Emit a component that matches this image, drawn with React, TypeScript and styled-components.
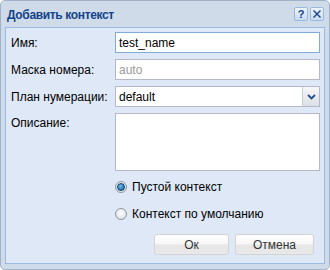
import React from "react";
import styled, { createGlobalStyle } from "styled-components";

const Global = createGlobalStyle`
  html, body { margin: 0; padding: 0; background: #ffffff; }
  body { font-family: "Liberation Sans", Arial, sans-serif; font-size: 12px; }
  * { box-sizing: border-box; }
`;

const Window = styled.div`
  width: 330px;
  height: 270px;
  background: #cfdbe8;
  border: 1px solid #9fb2c8;
  border-radius: 5px;
  display: flex;
  flex-direction: column;
  overflow: hidden;
`;

const TitleBar = styled.div`
  height: 26px;
  display: flex;
  align-items: center;
  padding: 0 5px 0 6px;
  flex: none;
`;

const Title = styled.div`
  flex: 1;
  font-weight: bold;
  font-size: 12px;
  letter-spacing: -0.35px;
  color: #15428b;
  padding-top: 1px;
`;

const Tools = styled.div`
  display: flex;
  gap: 2px;
`;

const Tool = styled.div`
  width: 14px;
  height: 14px;
  border: 1px solid #9ab9de;
  border-radius: 2px;
  background: linear-gradient(#eef4fb, #c9dbef);
  color: #15428b;
  display: flex;
  align-items: center;
  justify-content: center;
  font-weight: bold;
  font-size: 11px;
  line-height: 1;
`;

const Panel = styled.div`
  margin: 0 4px 5px 4px;
  flex: 1;
  background: #dfe8f6;
  border: 1px solid #99bbe8;
  padding: 4px 4px 8px 5px;
  display: flex;
  flex-direction: column;
`;

const Form = styled.div`
  display: grid;
  grid-template-columns: 104px 205px;
  row-gap: 6px;
  align-items: center;
`;

const Label = styled.div<{ $top?: boolean }>`
  color: #000;
  font-size: 12px;
  align-self: ${(p) => (p.$top ? "start" : "center")};
  padding-top: ${(p) => (p.$top ? "3px" : "0")};
`;

const Field = styled.div<{ $focus?: boolean; $h?: number }>`
  height: ${(p) => p.$h ?? 21}px;
  background: #fff;
  border: 1px solid ${(p) => (p.$focus ? "#7eadd9" : "#b5b8c8")};
  display: flex;
  align-items: center;
  padding-left: 3px;
  font-size: 12px;
  color: #000;
`;

const Value = styled.span<{ $muted?: boolean }>`
  flex: 1;
  color: ${(p) => (p.$muted ? "#9a9a9a" : "#000")};
`;

const Trigger = styled.div`
  width: 17px;
  height: 100%;
  border-left: 1px solid #c8ccd6;
  background: linear-gradient(#f6f7f9, #dcdfe4);
  display: flex;
  align-items: center;
  justify-content: center;
`;

const Options = styled.div`
  margin-top: 6px;
  padding-left: 104px;
  display: flex;
  flex-direction: column;
  gap: 7px;
`;

const Option = styled.div`
  height: 20px;
  display: flex;
  align-items: center;
  gap: 5px;
  font-size: 12px;
  color: #000;
`;

const Radio = styled.div<{ $on?: boolean }>`
  width: 12px;
  height: 12px;
  border-radius: 50%;
  border: 1px solid #8d96a2;
  background: radial-gradient(circle at 50% 40%, #ffffff, #d4d8dd);
  display: flex;
  align-items: center;
  justify-content: center;
  &::after {
    content: "";
    display: ${(p) => (p.$on ? "block" : "none")};
    width: 6px;
    height: 6px;
    border-radius: 50%;
    background: radial-gradient(circle at 40% 35%, #6fc0f0, #0a5a9c);
    border: 1px solid #0c3f6e;
  }
`;

const Buttons = styled.div`
  margin-top: 10px;
  display: flex;
  justify-content: flex-end;
  gap: 6px;
  padding-right: 6px;
`;

const Button = styled.div<{ $w: number }>`
  width: ${(p) => p.$w}px;
  height: 21px;
  border: 1px solid #d4d4d4;
  border-radius: 3px;
  background: linear-gradient(#ffffff 0%, #f7f7f7 45%, #e6e6e6 55%, #e9e9e9 100%);
  display: flex;
  align-items: center;
  justify-content: center;
  color: #333;
  font-size: 12px;
`;

export default function App() {
  return (
    <>
      <Global />
      <Window>
        <TitleBar>
          <Title>Добавить контекст</Title>
          <Tools>
            <Tool>?</Tool>
            <Tool>
              <svg width="10" height="10" viewBox="0 0 10 10">
                <path d="M1.5 1.5 L8.5 8.5 M8.5 1.5 L1.5 8.5" stroke="#15428b" strokeWidth="1.4" />
              </svg>
            </Tool>
          </Tools>
        </TitleBar>
        <Panel>
          <Form>
            <Label>Имя:</Label>
            <Field $focus>
              <Value>test_name</Value>
            </Field>
            <Label>Маска номера:</Label>
            <Field>
              <Value $muted>auto</Value>
            </Field>
            <Label>План нумерации:</Label>
            <Field>
              <Value>default</Value>
              <Trigger>
                <svg width="9" height="6" viewBox="0 0 9 6">
                  <path d="M1 1 L4.5 4.5 L8 1" fill="none" stroke="#1f4f8a" strokeWidth="1.8" />
                </svg>
              </Trigger>
            </Field>
            <Label $top>Описание:</Label>
            <Field $h={58} />
          </Form>
          <Options>
            <Option>
              <Radio $on />
              Пустой контекст
            </Option>
            <Option>
              <Radio />
              Контекст по умолчанию
            </Option>
          </Options>
          <Buttons>
            <Button $w={75}>Ок</Button>
            <Button $w={79}>Отмена</Button>
          </Buttons>
        </Panel>
      </Window>
    </>
  );
}
